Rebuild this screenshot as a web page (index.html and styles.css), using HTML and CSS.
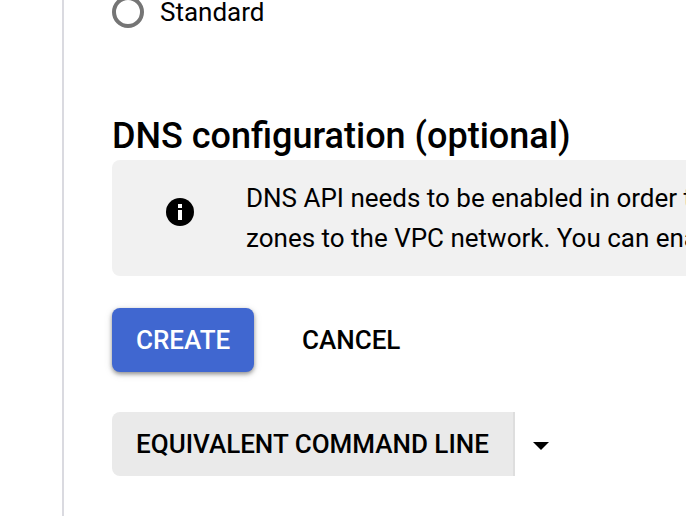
FILE: index.html
```html
<!DOCTYPE html>
<html lang="en">
<head>
<meta charset="utf-8">
<title>DNS configuration</title>
<link rel="stylesheet" href="styles.css">
</head>
<body>
<div class="page">
  <main class="content">
    <label class="radio"><span class="radio-dot"></span><span class="radio-text">Standard</span></label>
    <h2 class="heading">DNS configuration (optional)</h2>
    <section class="notice">
      <svg class="info" viewBox="0 0 28 28"><circle cx="14" cy="14" r="14" fill="#000"/><path d="M12 6h4v4h-4zM12 12h4v10h-4z" fill="#fff"/></svg>
      <p class="notice-text">DNS API needs to be enabled in order to assign DNS<br>zones to the VPC network. You can enable it here</p>
    </section>
    <div class="actions">
      <button class="btn create">CREATE</button>
      <button class="btn cancel">CANCEL</button>
    </div>
    <div class="command">
      <button class="btn line">EQUIVALENT COMMAND LINE</button>
      <svg class="caret" viewBox="0 0 16 8"><path d="M0 0h16L8 8z"/></svg>
    </div>
  </main>
</div>
</body>
</html>
```
FILE: styles.css
```css
* { box-sizing: border-box; }
body { margin: 0; background: #fff; color: #000; font-family: Roboto, sans-serif; overflow: hidden; }
.page { width: 686px; height: 516px; overflow: hidden; padding-left: 62px; }
.content { height: 516px; border-left: 2px solid #dadae0; padding-left: 48px; overflow: hidden; }
.radio { display: flex; align-items: center; height: 32px; margin-top: -4px; }
.radio-dot { width: 32px; height: 32px; border: 4px solid #757575; border-radius: 50%; }
.radio-text { margin-left: 16px; font-size: 26px; line-height: 32px; }
.heading { margin: 84px 0 0; height: 48px; font-size: 36px; line-height: 48px; font-weight: 500; white-space: nowrap; }
.notice { display: flex; height: 116px; width: 700px; background: #f1f1f1; border-radius: 8px; padding: 18px 0 0 54px; }
.info { width: 28px; height: 28px; margin-top: 20px; flex: none; }
.notice-text { margin: 0 0 0 52px; font-size: 26px; line-height: 40px; white-space: nowrap; }
.actions { display: flex; margin-top: 32px; gap: 24px; }
.btn { height: 64px; border: 0; padding: 0 24px; font: 500 26px/64px Roboto, sans-serif; color: #000; background: none; white-space: nowrap; }
.create { width: 142px; color: #fff; background: #4067d0; border-radius: 8px; box-shadow: 0 2px 4px rgba(0,0,0,.4), 0 2px 10px rgba(0,0,0,.1); }
.command { display: flex; align-items: center; margin-top: 40px; }
.line { width: 403px; background: #eaeaea; border-right: 2px solid #dedede; border-radius: 8px 0 0 8px; }
.caret { width: 16px; height: 8px; margin: 4px 0 0 18px; }
```
